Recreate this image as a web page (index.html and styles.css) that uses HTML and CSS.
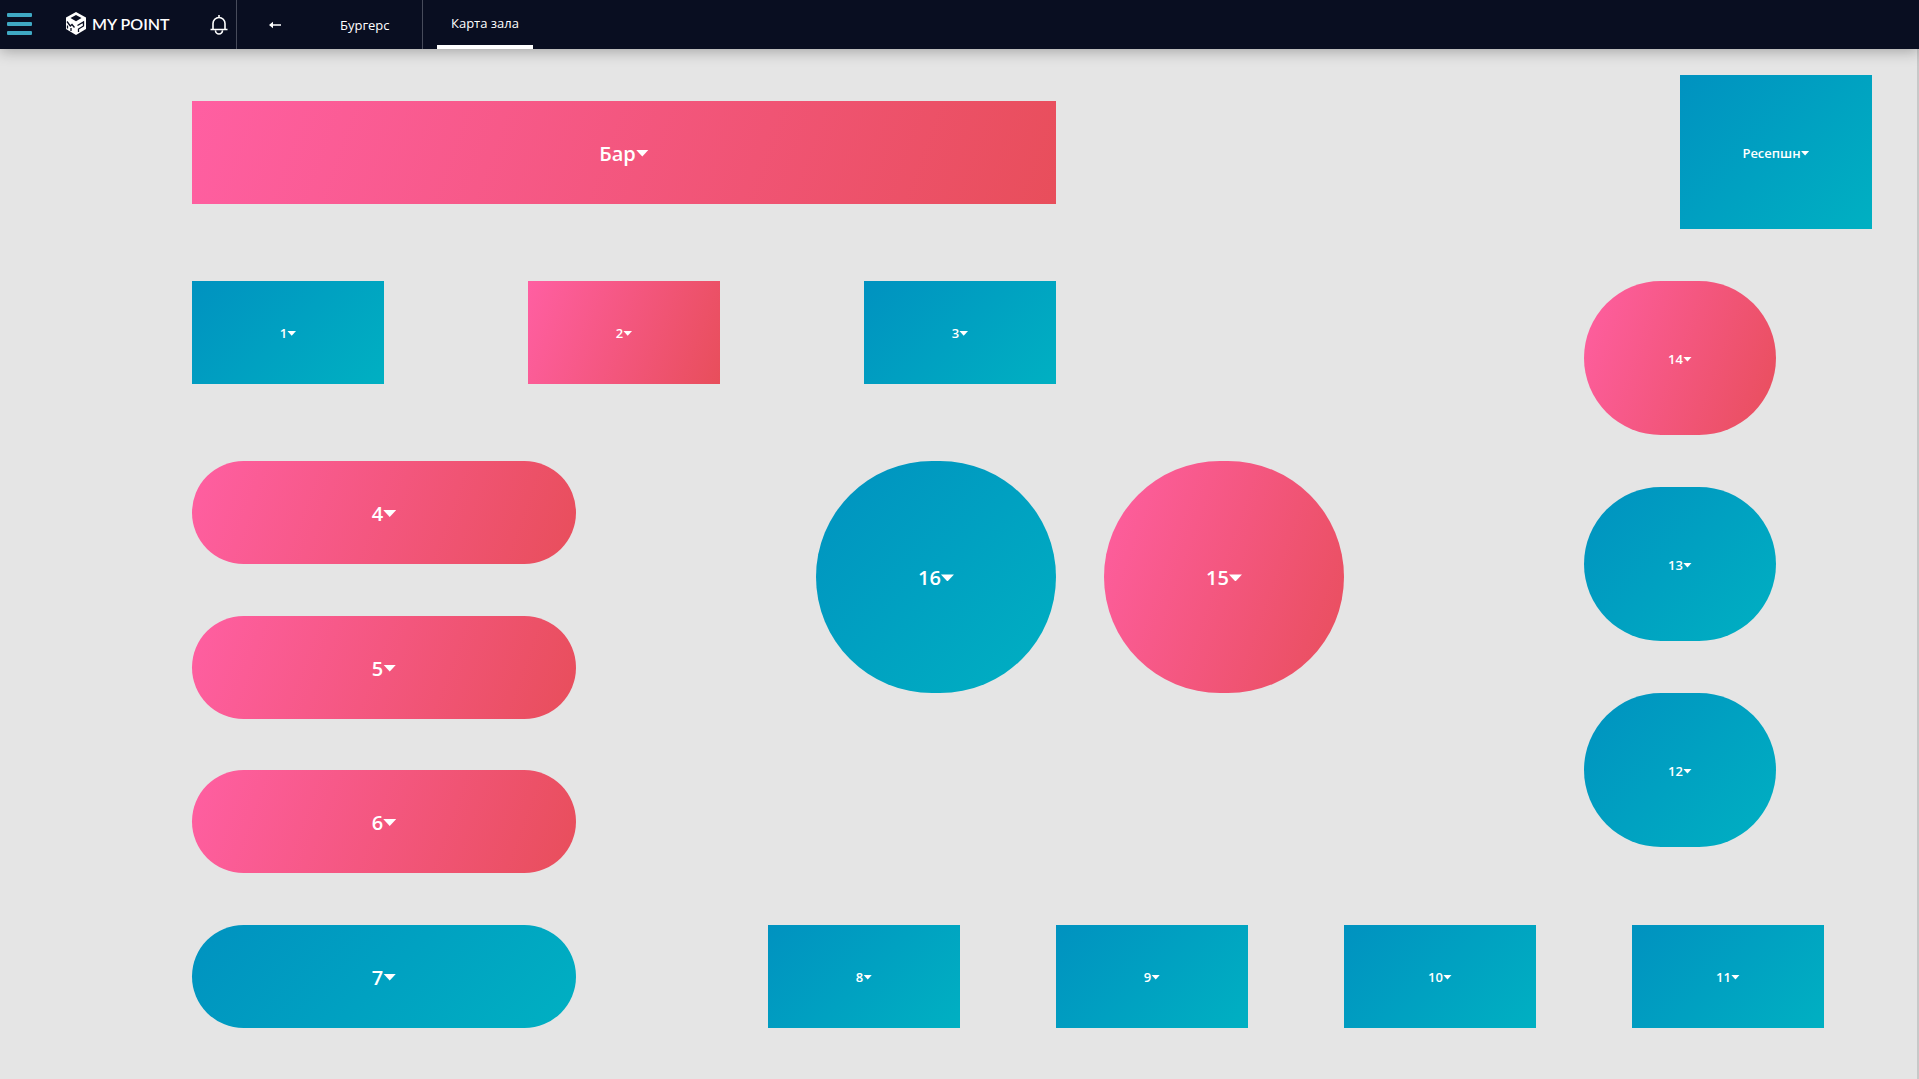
FILE: index.html
```
<!DOCTYPE html>
<html lang="ru">
<head>
<meta charset="utf-8">
<title>Карта зала</title>
<link rel="stylesheet" href="styles.css">
</head>
<body>
<header class="topbar">
  <button class="menu-button" type="button" aria-label="Меню"><span></span><span></span><span></span></button>
  <a class="brand" href="#">
    <svg class="brand-mark" viewBox="0 0 20 23" aria-hidden="true">
      <path fill="#fff" d="M10 0 20 5.500V17L10 23 0 17V5.500Z"/>
      <path fill="#090e21" d="M10 3 15.500 6 10 9.200 4.500 6Z"/>
      <g fill="none" stroke="#090e21" stroke-width="1.300">
        <path d="M1 9.500 4.300 14 6 12.500 8.500 15.500M1.500 13.500V16.500M5 16V19M11.500 13.500 17.500 10V14L12.500 17V20"/>
      </g>
    </svg>
    <span class="brand-name">MY POINT</span>
  </a>
  <button class="bell" type="button" aria-label="Уведомления">
    <svg viewBox="0 0 18 20" fill="none" stroke="#fff" stroke-width="1.600" aria-hidden="true">
      <path d="M.5 14.500h17M3 14V8.500a6 6 0 0 1 12 0V14M9 2.500V0M5.500 15.500a3.500 3.500 0 0 0 7 0"/>
    </svg>
  </button>
  <nav class="crumbs">
    <a class="back" href="#" aria-label="Назад">
      <svg viewBox="0 0 12 8" aria-hidden="true"><path fill="#fff" d="M0 4 4 .8V3.200H12V4.800H4V7.200Z"/></svg>
    </a>
    <a class="place" href="#">Бургерс</a>
  </nav>
  <nav class="tabs"><a class="tab" href="#" aria-current="page">Карта зала</a></nav>
</header>
<main class="hall">
  <button type="button" class="table busy large bar">Бар</button>
  <button type="button" class="table free reception">Ресепшн</button>
  <button type="button" class="table free t1">1</button>
  <button type="button" class="table busy t2">2</button>
  <button type="button" class="table free t3">3</button>
  <button type="button" class="table busy large long t4">4</button>
  <button type="button" class="table busy large long t5">5</button>
  <button type="button" class="table busy large long t6">6</button>
  <button type="button" class="table free large long t7">7</button>
  <button type="button" class="table free t8">8</button>
  <button type="button" class="table free t9">9</button>
  <button type="button" class="table free t10">10</button>
  <button type="button" class="table free t11">11</button>
  <button type="button" class="table free oval t12">12</button>
  <button type="button" class="table free oval t13">13</button>
  <button type="button" class="table busy oval t14">14</button>
  <button type="button" class="table busy large circle t15">15</button>
  <button type="button" class="table free large circle t16">16</button>
</main>
</body>
</html>
```
FILE: styles.css
```
* { box-sizing: border-box; }
body {
  margin: 0;
  min-height: 100vh;
  display: flex;
  flex-direction: column;
  overflow-x: hidden;
  background: #e5e5e5;
  color: #fff;
  font-family: "Open Sans", "Noto Sans", sans-serif;
}
a { color: inherit; text-decoration: none; }
button { border: 0; padding: 0; background: none; color: inherit; font: inherit; cursor: pointer; }
svg { display: block; }

.topbar {
  height: 49px;
  display: flex;
  align-items: center;
  background: #090e21;
  box-shadow: 0 2px 14px rgba(0, 0, 0, .3);
  font-size: 13px;
  z-index: 1;
}
.menu-button { display: grid; gap: 5px; width: 25px; margin-left: 7px; padding-bottom: 1px; }
.menu-button span { height: 4px; border-radius: 1px; background: #3fa9c4; }
.brand { display: flex; align-items: center; gap: 6px; width: 144px; margin-left: 34px; padding-bottom: 2px; }
.brand-mark { width: 20px; height: 23px; }
.brand-name { font: 600 16px Lato, sans-serif; white-space: nowrap; }
.bell svg { width: 18px; height: 20px; }
.crumbs {
  align-self: stretch;
  display: flex;
  align-items: center;
  width: 187px;
  margin-left: 8px;
  border: solid #474b5b;
  border-width: 0 1px;
}
.back { margin-left: 32px; }
.back svg { width: 12px; height: 8px; }
.place { margin-left: 59px; }
.tabs { align-self: stretch; display: flex; margin-left: 14px; }
.tab { display: flex; align-items: center; padding: 1px 14px 0; border-bottom: 4px solid #fff; }

/* The floor is a 40 by 40 grid; every table sits on whole cells. */
.hall {
  flex: 1;
  display: grid;
  grid-template: repeat(40, minmax(0, 1fr)) / repeat(40, minmax(0, 1fr));
  margin-right: -1px;
  box-shadow: inset -3px 0 #c8c8c8;
}
.table {
  display: flex;
  align-items: center;
  justify-content: center;
  padding-top: 2px;
  font-size: 13px;
  font-weight: 600;
  grid-column-end: span 4;
  grid-row-end: span 4;
}
.table::after {
  content: "";
  width: 9px;
  height: 5px;
  background: currentColor;
  clip-path: polygon(0 0, 100% 0, 50% 100%);
}
.large { font-size: 20px; }
.large::after { width: 13px; height: 7px; }
.busy { background: linear-gradient(110deg, #ff5fa2, #e84e5b); }
.free { background: linear-gradient(135deg, #0092c0, #00b0c2); }
.long { grid-column: 5 / span 8; border-radius: 100px; }
.oval { grid-column: 34 / span 4; grid-row-end: span 6; border-radius: 100px; }
.circle { grid-column-end: span 5; grid-row: 17 / span 9; border-radius: 200px; }

.bar { grid-area: 3 / 5 / span 4 / span 18; }
.reception { grid-area: 2 / 36 / span 6 / span 4; }
.t1 { grid-column-start: 5; }
.t2 { grid-column-start: 12; }
.t3 { grid-column-start: 19; }
.t1, .t2, .t3, .t14 { grid-row-start: 10; }
.t4 { grid-row-start: 17; }
.t5 { grid-row-start: 23; }
.t6 { grid-row-start: 29; }
.t7, .t8, .t9, .t10, .t11 { grid-row-start: 35; }
.t8 { grid-column-start: 17; }
.t9 { grid-column-start: 23; }
.t10 { grid-column-start: 29; }
.t11 { grid-column-start: 35; }
.t12 { grid-row-start: 26; }
.t13 { grid-row-start: 18; }
.t15 { grid-column-start: 24; }
.t16 { grid-column-start: 18; }
```
